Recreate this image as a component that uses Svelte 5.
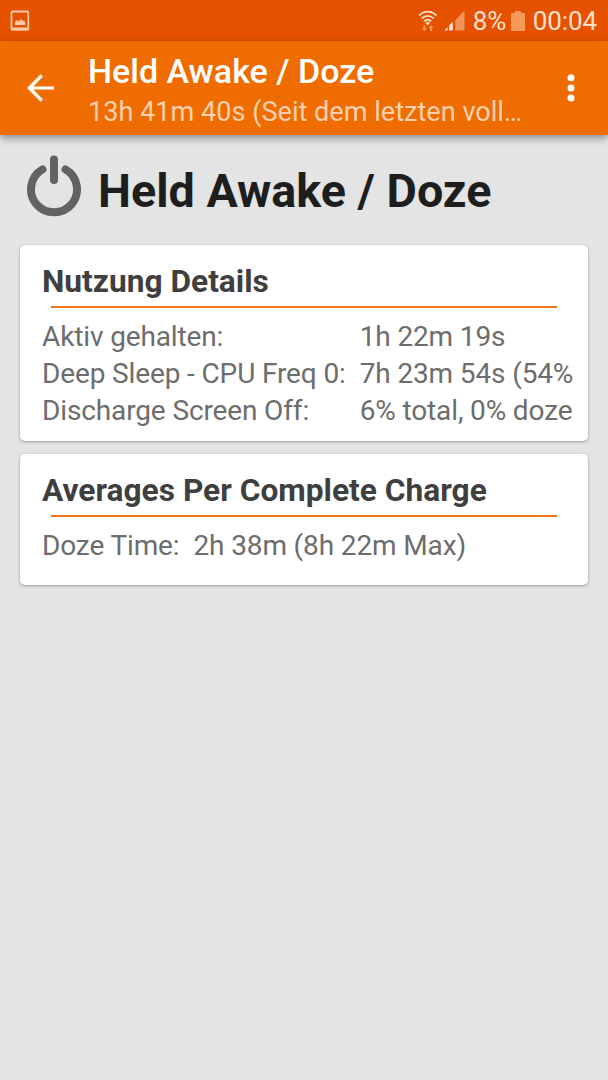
<script>
  const title = 'Held Awake / Doze';
  const subtitle = '13h 41m 40s (Seit dem letzten voll…';

  const cards = [
    {
      heading: 'Nutzung Details',
      rows: [
        ['Aktiv gehalten:', '1h 22m 19s'],
        ['Deep Sleep - CPU Freq 0:', '7h 23m 54s (54%'],
        ['Discharge Screen Off:', '6% total, 0% doze']
      ]
    },
    {
      heading: 'Averages Per Complete Charge',
      rows: [['Doze Time:', '2h 38m (8h 22m Max)']]
    }
  ];
</script>

<div class="screen">
  <div class="status">
    <svg class="picture" width="20" height="22" viewBox="0 0 20 22">
      <rect x="1.5" y="1.5" width="16.8" height="18" rx="1" fill="none" stroke="#fbcba9" stroke-width="1.8" />
      <path d="M1 17.5h18v2.8H1z" fill="#fbcba9" />
      <path d="M5 15v-3l2-2 1.5 1.5L11 9l1.7 2 1.3-.8 1.2 2V15z" fill="#fbcba9" />
    </svg>
    <svg class="wifi" width="20" height="22" viewBox="0 0 20 22">
      <g fill="none" stroke="#fde0cb" stroke-width="1.9">
        <path d="M1.2 5.5C6 .3 13.5.3 18.3 5.5" />
        <path d="M3.9 8.5c3.4-3.5 8.3-3.5 11.7 0" />
        <path d="M6.4 11.3c2-2 4.8-2 6.8 0" />
      </g>
      <path d="M7.3 12.8q2.4-1.6 4.8 0l-2.4 2.7z" fill="#fde0cb" />
      <path d="M5.5 15h1.8v3.4H9l-2.6 2.8-2.6-2.8h1.7zM12.2 21.2h1.8v-3.4h1.7l-2.6-2.8-2.6 2.8h1.7z" fill="#f49a5b" />
    </svg>
    <svg class="signal" width="21" height="21" viewBox="0 0 21 21">
      <path d="M11.3 10.2 20.5 .5v20h-9.2z" fill="#f2935a" />
      <path d="M.3 20.5 3.6 17v3.5zM5 20.5v-5l3.8-3.8v8.8z" fill="#fde0cb" />
    </svg>
    <span class="percent">8%</span>
    <svg class="battery" width="14" height="20" viewBox="0 0 14 20">
      <path d="M4 0h6v2h4v18H0V2h4z" fill="#f49a5b" />
    </svg>
    <span class="clock">00:04</span>
  </div>

  <header>
    <svg class="back" width="28" height="28" viewBox="0 0 28 28">
      <path d="M14.8 1.5 2.3 14l12.5 12.5M2.5 14H27" fill="none" stroke="#fff" stroke-width="3.2" />
    </svg>
    <div class="titles">
      <h1>{title}</h1>
      <p>{subtitle}</p>
    </div>
    <svg class="more" width="8" height="28" viewBox="0 0 8 28">
      <circle cx="4" cy="3.7" r="3.5" fill="#fff" />
      <circle cx="4" cy="13.9" r="3.5" fill="#fff" />
      <circle cx="4" cy="24.1" r="3.5" fill="#fff" />
    </svg>
  </header>

  <main>
    <div class="intro">
      <svg width="56" height="62" viewBox="0 0 56 62">
        <g fill="none" stroke="#626262" stroke-width="8" stroke-linecap="round">
          <path d="M16.5 14.4A23 23 0 1 0 39.5 14.4" />
          <path d="M28 4.5v20.5" />
        </g>
      </svg>
      <h2>{title}</h2>
    </div>

    {#each cards as card}
      <section>
        <h3>{card.heading}</h3>
        <hr />
        <div class="rows">
          {#each card.rows as [label, value]}
            <span>{label}</span>
            <span>{value}</span>
          {/each}
        </div>
      </section>
    {/each}
  </main>
</div>

<style>
  :global(body) {
    background: #e4e4e4;
  }

  .screen {
    height: 1080px;
    overflow: hidden;
    background: #e4e4e4;
    font-family: Roboto, sans-serif;
    white-space: nowrap;
  }

  h1, h2, h3, p {
    margin: 0;
  }

  svg {
    flex: none;
    display: block;
  }

  .status {
    height: 41px;
    box-sizing: border-box;
    padding: 0 11px 0 10px;
    display: flex;
    align-items: center;
    background: #e65100;
    color: #fde0cb;
    font-size: 26px;
    letter-spacing: -0.1px;
  }

  .wifi {
    margin-left: auto;
    margin-right: 6px;
  }

  .percent {
    margin-left: 8px;
    width: 32px;
  }

  .battery {
    margin-left: 6px;
    margin-right: 8px;
  }

  header {
    position: relative;
    height: 94px;
    display: flex;
    align-items: center;
    background: #ef6c00;
    box-shadow: 0 3px 8px rgba(0, 0, 0, 0.4);
  }

  .back {
    margin-left: 27px;
    margin-right: 33px;
  }

  .titles {
    flex: 1;
    padding-top: 7px;
  }

  h1 {
    color: #fff;
    font-size: 34px;
    font-weight: 500;
    line-height: 40px;
  }

  .titles p {
    color: #fad0ad;
    font-size: 27.1px;
    line-height: 42px;
  }

  .more {
    margin-right: 33px;
  }

  main {
    padding: 0 20px;
  }

  .intro {
    height: 110px;
    display: flex;
    align-items: center;
    padding-left: 6px;
  }

  .intro svg {
    margin-bottom: 8px;
  }

  h2 {
    margin-left: 16px;
    padding-top: 1px;
    color: #1e1e1e;
    font-size: 46.7px;
    font-weight: 700;
  }

  section {
    box-sizing: border-box;
    min-height: 131px;
    margin-bottom: 13px;
    padding: 17px 14px 12px 22px;
    border-radius: 5px;
    background: #fff;
    box-shadow: 0 1px 3px rgba(0, 0, 0, 0.35);
  }

  h3 {
    color: #3f3f3f;
    font-size: 31.7px;
    font-weight: 700;
    line-height: 40px;
  }

  hr {
    height: 2px;
    margin: 4px 17px 10px 9px;
    border: 0;
    background: #f5731c;
  }

  .rows {
    display: grid;
    grid-template-columns: max-content 1fr;
    column-gap: 14px;
    color: #6d6d6d;
    font-size: 28px;
    letter-spacing: -0.13px;
    line-height: 37px;
  }
</style>
